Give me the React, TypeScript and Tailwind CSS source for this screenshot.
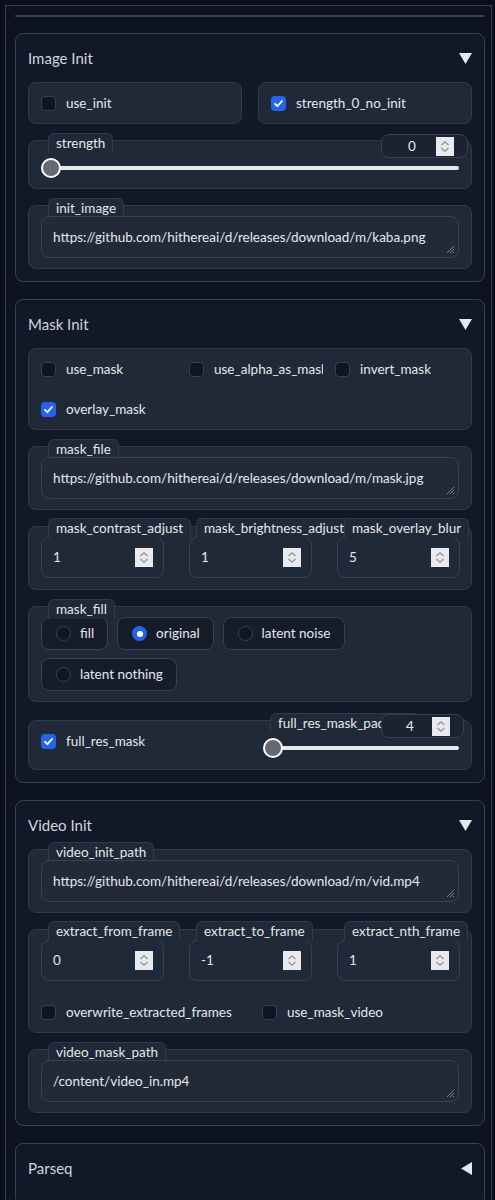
import React from 'react'

const border = 'border-[#374151]'

function Triangle({ open }: { open: boolean }) {
  return open ? (
    <svg width="13" height="11" viewBox="0 0 13 11"><polygon points="0,0 13,0 6.5,11" fill="#e5e7eb" /></svg>
  ) : (
    <svg width="11" height="13" viewBox="0 0 11 13"><polygon points="11,0 11,13 0,6.5" fill="#e5e7eb" /></svg>
  )
}

function Panel({ title, open = true, children }: { title: string; open?: boolean; children?: React.ReactNode }) {
  return (
    <div className={`rounded-lg border ${border} bg-[#111827] px-3 pb-3`}>
      <div className="mt-3 mb-3 flex h-6 items-center justify-between">
        <span className="text-[15px] text-[#d1d5db]">{title}</span>
        <Triangle open={open} />
      </div>
      {open && <div className="flex flex-col gap-4">{children}</div>}
    </div>
  )
}

function Block({ className = '', children }: { className?: string; children: React.ReactNode }) {
  return <div className={`relative rounded-lg border border-[#323a49] bg-[#1f2937] ${className}`}>{children}</div>
}

function Tab({ className = '', children }: { className?: string; children: React.ReactNode }) {
  return (
    <div className={`absolute h-5 whitespace-nowrap rounded-t-md border-x border-t border-[#323a49] bg-[#1f2937] px-[7px] text-[13.5px] leading-[19px] text-[#e5e7eb] ${className}`}>
      {children}
    </div>
  )
}

function Check({ on = false, label }: { on?: boolean; label: string }) {
  return (
    <div className="flex h-5 min-w-0 items-center gap-[10px]">
      {on ? (
        <span className="flex h-[15px] w-[15px] shrink-0 items-center justify-center rounded-[4px] bg-[#2563eb]">
          <svg width="11" height="11" viewBox="0 0 11 11"><path d="M2 5.8 4.4 8.2 9 3" fill="none" stroke="white" strokeWidth="1.8" strokeLinecap="round" strokeLinejoin="round" /></svg>
        </span>
      ) : (
        <span className="h-[15px] w-[15px] shrink-0 rounded-[4px] border border-[#374151] bg-[#0f1521]" />
      )}
      <span className="overflow-hidden whitespace-nowrap text-[13.5px] text-[#e5e7eb]">{label}</span>
    </div>
  )
}

function Spinner() {
  return (
    <span className="flex h-[19px] w-[18px] shrink-0 items-center justify-center bg-[#e9eaee]">
      <svg width="18" height="19" viewBox="0 0 18 19">
        <path d="M5.5 8 9 4.8 12.5 8" fill="none" stroke="#8a8e96" strokeWidth="1.1" />
        <path d="M5.5 11 9 14.2 12.5 11" fill="none" stroke="#8a8e96" strokeWidth="1.1" />
      </svg>
    </span>
  )
}

function NumberInput({ value }: { value: string }) {
  return (
    <div className={`flex h-[41px] items-center justify-between rounded-lg border ${border} bg-[#1f2937] pl-[11px] pr-[10px]`}>
      <span className="text-[13.5px] text-[#e5e7eb]">{value}</span>
      <Spinner />
    </div>
  )
}

function SmallNumber({ value, className = '' }: { value: string; className?: string }) {
  return (
    <div className={`absolute z-10 flex h-6 items-center rounded-lg border ${border} bg-[#1b2230] pr-[13px] ${className}`}>
      <span className="flex-1 pl-[6px] text-center text-[13.5px] text-[#e5e7eb]">{value}</span>
      <Spinner />
    </div>
  )
}

function Slider() {
  return (
    <div className="relative h-5">
      <div className="absolute left-[2px] right-0 top-[8px] h-[4px] rounded-full bg-[#e5e7eb]" />
      <div className="absolute left-0 top-0 h-5 w-5 rounded-full border-2 border-white bg-[#666873]" />
    </div>
  )
}

function Resize() {
  return (
    <svg className="absolute bottom-[3px] right-[3px]" width="10" height="10" viewBox="0 0 10 10">
      <path d="M9 2 2 9M9 5 5 9M9 8 8 9" stroke="#7b8190" strokeWidth="1" />
    </svg>
  )
}

function TextBlock({ label, value, className = '' }: { label: string; value: string; className?: string }) {
  return (
    <Block className={`px-3 pt-[10px] pb-[10px] ${className}`}>
      <Tab className="-top-2 left-[19px]">{label}</Tab>
      <div className={`relative flex h-[42px] items-center rounded-lg border ${border} bg-[#222a38] px-[11px]`}>
        <span className="whitespace-nowrap text-[13.5px] text-[#e5e7eb]">{value}</span>
        <Resize />
      </div>
    </Block>
  )
}

function NumCol({ label, value }: { label: string; value: string }) {
  return (
    <div className="relative">
      <Tab className="-top-[19px] left-[7px]">{label}</Tab>
      <NumberInput value={value} />
    </div>
  )
}

function Radio({ on = false, label }: { on?: boolean; label: string }) {
  return (
    <div className={`flex h-[33px] items-center gap-[9px] rounded-lg border ${border} bg-[#161d2a] pl-[14px] pr-[13px]`}>
      {on ? (
        <span className="flex h-[15px] w-[15px] items-center justify-center rounded-full bg-[#2563eb]">
          <span className="h-[6px] w-[6px] rounded-full bg-white" />
        </span>
      ) : (
        <span className="h-[15px] w-[15px] rounded-full border border-[#374151] bg-[#0f1521]" />
      )}
      <span className="whitespace-nowrap text-[13.5px] text-[#e5e7eb]">{label}</span>
    </div>
  )
}

export default function App() {
  return (
    <div className="min-h-screen bg-[#0b0f19] pt-[5px] pl-[5px] pr-[3px] font-['Lato','Liberation_Sans',sans-serif]">
      <div className={`min-h-[1200px] border-x border-t ${border} bg-[#0e1320] pl-[9px] pr-[6px] pt-[9px]`}>
        <div className="mb-4 h-[2px] rounded-full bg-[#374151]" />
        <div className="flex flex-col gap-[17px]">
          <Panel title="Image Init">
            <div className="grid grid-cols-2 gap-4">
              <Block className="flex h-[42px] items-center px-3"><Check label="use_init" /></Block>
              <Block className="flex h-[42px] items-center px-3"><Check on label="strength_0_no_init" /></Block>
            </div>
            <Block className="h-[49px] px-3 pt-[17px]">
              <Tab className="-top-2 left-[19px]">strength</Tab>
              <SmallNumber value="0" className="-top-[7px] right-[3px] w-[87px]" />
              <Slider />
            </Block>
            <TextBlock label="init_image" value="https://github.com/hithereai/d/releases/download/m/kaba.png" />
          </Panel>

          <Panel title="Mask Init">
            <Block className="px-3 py-[10px]">
              <div className="grid grid-cols-[136px_134px_1fr] gap-x-3 gap-y-5">
                <Check label="use_mask" />
                <Check label="use_alpha_as_mask" />
                <Check label="invert_mask" />
                <Check on label="overlay_mask" />
              </div>
            </Block>
            <TextBlock label="mask_file" value="https://github.com/hithereai/d/releases/download/m/mask.jpg" />
            <Block className="px-3 pt-[10px] pb-[11px]">
              <div className="grid grid-cols-[123px_123px_123px] gap-x-[25px]">
                <NumCol label="mask_contrast_adjust" value="1" />
                <NumCol label="mask_brightness_adjust" value="1" />
                <NumCol label="mask_overlay_blur" value="5" />
              </div>
            </Block>
            <Block className="px-3 py-[10px]">
              <Tab className="-top-2 left-[19px]">mask_fill</Tab>
              <div className="flex flex-col gap-2">
                <div className="flex gap-[9px]">
                  <Radio label="fill" />
                  <Radio on label="original" />
                  <Radio label="latent noise" />
                </div>
                <div className="flex">
                  <Radio label="latent nothing" />
                </div>
              </div>
            </Block>
            <Block className="mt-[2px] flex h-[50px] px-3">
              <div className="flex flex-1 items-center pb-[8px]">
                <Check on label="full_res_mask" />
              </div>
              <div className="relative w-[196px] pt-[17px]">
                <Tab className="-top-2 left-[7px]">full_res_mask_padding</Tab>
                <SmallNumber value="4" className="-top-[7px] -right-[5px] w-[83px]" />
                <Slider />
              </div>
            </Block>
          </Panel>

          <Panel title="Video Init">
            <TextBlock label="video_init_path" value="https://github.com/hithereai/d/releases/download/m/vid.mp4" />
            <Block className="px-3 pt-[10px] pb-[10px]">
              <div className="grid grid-cols-[123px_123px_123px] gap-x-[25px]">
                <NumCol label="extract_from_frame" value="0" />
                <NumCol label="extract_to_frame" value="-1" />
                <NumCol label="extract_nth_frame" value="1" />
              </div>
              <div className="mt-[21px] grid grid-cols-[221px_1fr]">
                <Check label="overwrite_extracted_frames" />
                <Check label="use_mask_video" />
              </div>
            </Block>
            <TextBlock label="video_mask_path" value="/content/video_in.mp4" />
          </Panel>

          <Panel title="Parseq" open={false} />
        </div>
      </div>
    </div>
  )
}
